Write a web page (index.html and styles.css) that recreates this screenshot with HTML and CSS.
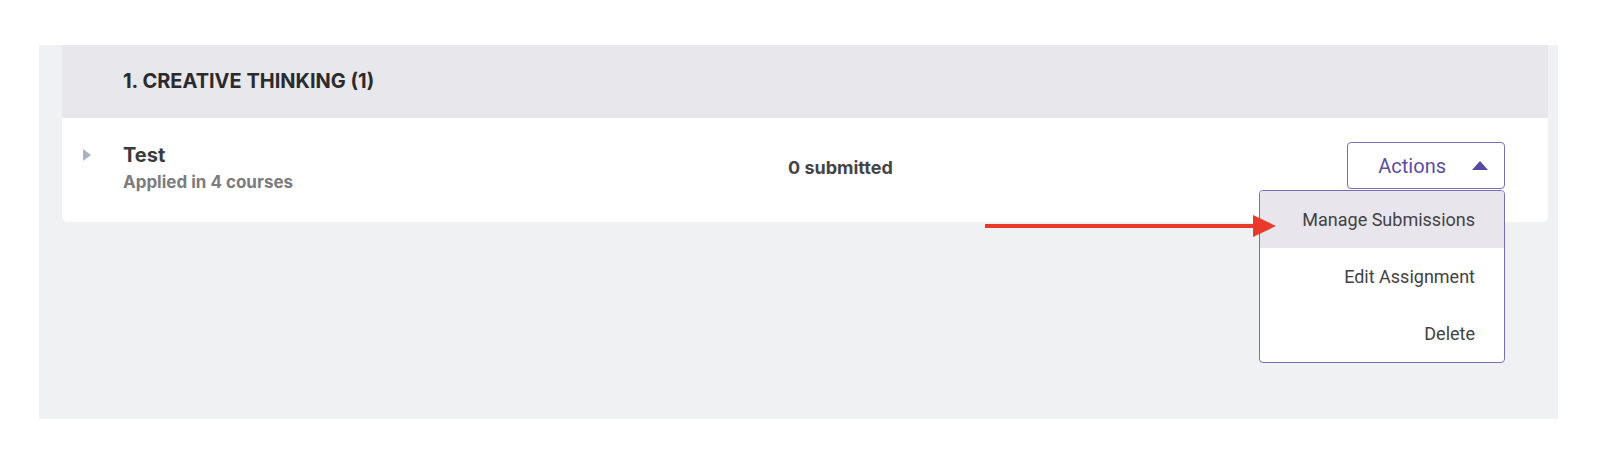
FILE: index.html
```html
<!DOCTYPE html>
<html lang="en">
<head>
  <meta charset="UTF-8">
  <meta name="viewport" content="width=device-width, initial-scale=1.0">
  <title>Assignments</title>
  <link rel="stylesheet" href="styles.css">
</head>
<body>
  <div id="panel">
    <div class="card">
      <div class="card-header">1. CREATIVE THINKING (1)</div>
      <div class="row">
        <span class="caret"></span>
        <div class="title-col">
          <div class="title">Test</div>
          <div class="subtitle">Applied in 4 courses</div>
        </div>
        <div class="count">0 submitted</div>
        <div class="actions">
          <button class="actions-btn">Actions <span class="arrow-up"></span></button>
          <ul class="menu">
            <li class="active">Manage Submissions</li>
            <li>Edit Assignment</li>
            <li>Delete</li>
          </ul>
          <!-- annotation arrow -->
          <svg class="pointer" width="300" height="26" viewBox="0 0 300 26">
            <line x1="0" y1="13" x2="270" y2="13" stroke="#e8392a" stroke-width="4"/>
            <polygon points="268,2 291,13 268,24" fill="#e8392a"/>
          </svg>
        </div>
      </div>
    </div>
  </div>
</body>
</html>
```

FILE: styles.css
```css
body {
  margin: 0;
  padding: 45px 0 0 39px;
  background: #fff;
  font-family: Inter, "Noto Sans", sans-serif;
}
#panel {
  width: 1519px;
  height: 374px;
  box-sizing: border-box;
  padding: 0 10px 0 23px;
  background-color: #f0f1f3;
}
.card {
  background-color: #fff;
  border-radius: 0 0 5px 5px;
}
.card-header {
  height: 73px;
  display: flex;
  align-items: center;
  padding-left: 61px;
  padding-bottom: 2px;
  box-sizing: border-box;
  background-color: #e8e7ec;
  font-size: 20px;
  font-weight: 700;
  color: #2b2b2e;
}
.row {
  height: 104px;
  display: flex;
  align-items: flex-start;
  position: relative;
}
.caret {
  width: 0;
  height: 0;
  margin: 31px 32px 0 21px;
  border-top: 6px solid transparent;
  border-bottom: 6px solid transparent;
  border-left: 8px solid #aab1c2;
}
.title-col {
  width: 665px;
  padding-top: 25px;
}
.title {
  font-size: 20px;
  font-weight: 700;
  color: #3a3a3c;
}
.subtitle {
  margin-top: 5px;
  font-size: 17px;
  font-weight: 700;
  color: #7c7c80;
}
.count {
  margin-top: 39px;
  font-size: 18px;
  font-weight: 700;
  color: #444447;
}
.actions {
  margin-left: auto;
  margin-right: 43px;
  margin-top: 24px;
  position: relative;
}
.actions-btn {
  width: 158px;
  height: 47px;
  display: flex;
  align-items: center;
  justify-content: flex-end;
  gap: 26px;
  padding: 0 16px 0 0;
  background-color: #fff;
  border: 1.5px solid #7a6db6;
  border-radius: 4px;
  font-family: Roboto, sans-serif;
  font-size: 20px;
  color: #5b4da2;
  cursor: pointer;
}
.arrow-up {
  width: 0;
  height: 0;
  border-left: 8px solid transparent;
  border-right: 8px solid transparent;
  border-bottom: 9px solid #5a4a9e;
}
.menu {
  position: absolute;
  top: 48px;
  right: 0;
  width: 246px;
  margin: 0;
  padding: 0;
  list-style: none;
  box-sizing: border-box;
  background-color: #fff;
  border: 1.5px solid #7a6db6;
  border-radius: 4px;
  overflow: hidden;
  font-family: Roboto, sans-serif;
  font-size: 18px;
  color: #424244;
  z-index: 2;
}
.menu li {
  height: 57px;
  display: flex;
  align-items: center;
  justify-content: flex-end;
  padding-right: 29px;
}
.menu li.active {
  background-color: #e8e6ec;
}
.pointer {
  position: absolute;
  top: 71px;
  left: -362px;
  z-index: 3;
}
```
